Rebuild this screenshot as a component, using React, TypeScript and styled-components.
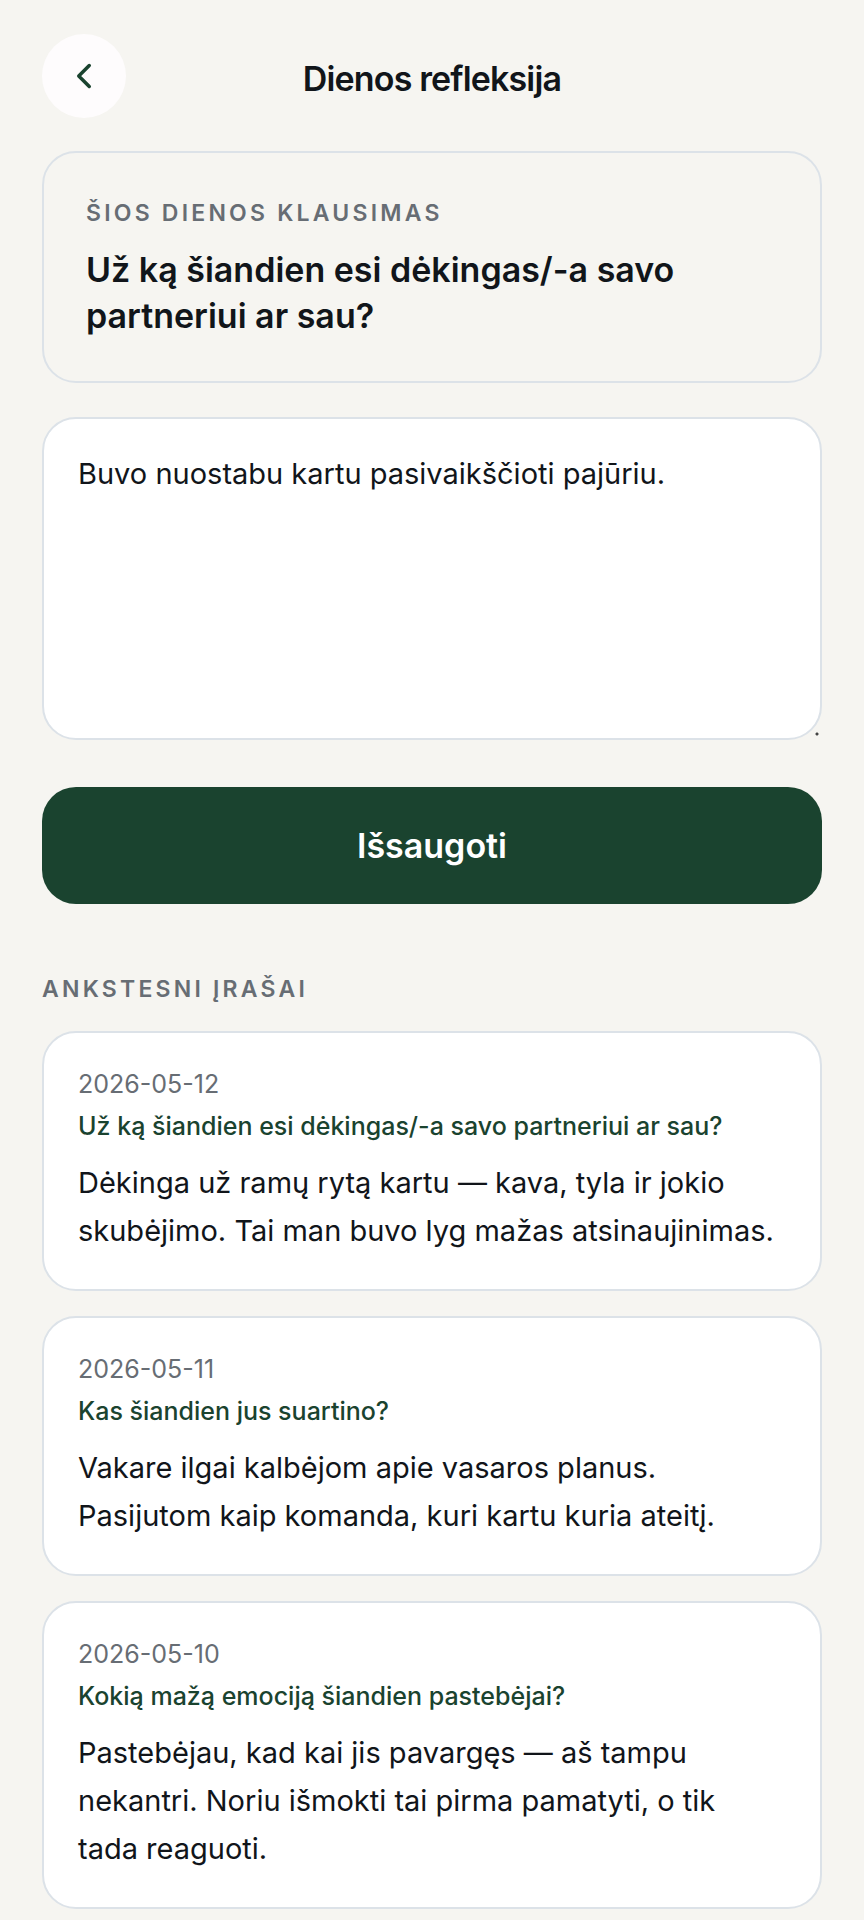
import * as React from 'react'
import { useState } from 'react'
import styled, { createGlobalStyle } from 'styled-components'
import { ChevronLeft } from 'lucide-react'

type Entry = {
  date: string
  question: string
  text: string
}

const entries: Entry[] = [
  {
    date: '2026-05-12',
    question: 'Už ką šiandien esi dėkingas/-a savo partneriui ar sau?',
    text: 'Dėkinga už ramų rytą kartu — kava, tyla ir jokio skubėjimo. Tai man buvo lyg mažas atsinaujinimas.',
  },
  {
    date: '2026-05-11',
    question: 'Kas šiandien jus suartino?',
    text: 'Vakare ilgai kalbėjom apie vasaros planus. Pasijutom kaip komanda, kuri kartu kuria ateitį.',
  },
  {
    date: '2026-05-10',
    question: 'Kokią mažą emociją šiandien pastebėjai?',
    text: 'Pastebėjau, kad kai jis pavargęs — aš tampu nekantri. Noriu išmokti tai pirma pamatyti, o tik tada reaguoti.',
  },
]

export default function App() {
  const [answer, setAnswer] = useState('Buvo nuostabu kartu pasivaikščioti pajūriu.')
  return (
    <Page>
      <GlobalStyle />
      <Header>
        <BackButton type='button' aria-label='Atgal'>
          <ChevronLeft size={42} />
        </BackButton>
        <Title>Dienos refleksija</Title>
      </Header>
      <Form onSubmit={event => event.preventDefault()}>
        <Prompt>
          <Overline>Šios dienos klausimas</Overline>
          <Question htmlFor='Answer'>Už ką šiandien esi dėkingas/-a savo partneriui ar sau?</Question>
        </Prompt>
        <Answer id='Answer' value={answer} onChange={e => setAnswer(e.target.value)} />
        <SaveButton type='submit'>Išsaugoti</SaveButton>
      </Form>
      <History>
        <Overline>Ankstesni įrašai</Overline>
        <EntryList>
          {entries.map(entry => (
            <EntryCard key={entry.date}>
              <EntryDate dateTime={entry.date}>{entry.date}</EntryDate>
              <EntryQuestion>{entry.question}</EntryQuestion>
              <EntryText>{entry.text}</EntryText>
            </EntryCard>
          ))}
        </EntryList>
      </History>
    </Page>
  )
}

const GlobalStyle = createGlobalStyle`
  *, *::before, *::after {
    box-sizing: border-box;
  }
  body {
    margin: 0;
    background: #f6f5f1;
    color: #11151a;
    font-family: Inter, 'Liberation Sans', sans-serif;
    font-optical-sizing: none;
    -webkit-font-smoothing: antialiased;
  }
  h1, h2, h3, p, ul {
    margin: 0;
    padding: 0;
  }
  button, textarea {
    font: inherit;
    font-optical-sizing: none;
  }
`
const Page = styled.main`
  padding: 34px 42px 25px;
`
const Header = styled.header`
  display: grid;
  grid-template-columns: 84px 1fr 84px;
  align-items: center;
  margin-bottom: 33px;
`
const BackButton = styled.button`
  display: flex;
  align-items: center;
  justify-content: center;
  height: 84px;
  padding: 0;
  border: 0;
  border-radius: 50%;
  background: #fefcfd;
  color: #1a432f;
  cursor: pointer;
`
const Title = styled.h1`
  padding-top: 6px;
  font-size: 34px;
  font-weight: 600;
  line-height: 46px;
  letter-spacing: -0.025em;
  text-align: center;
`
const Form = styled.form`
  display: flex;
  flex-direction: column;
`
const Prompt = styled.div`
  padding: 42px;
  border: 2px solid #dce2e8;
  border-radius: 34px;
`
const Overline = styled.h2`
  font-size: 23px;
  font-weight: 600;
  line-height: 36px;
  letter-spacing: 0.14em;
  text-transform: uppercase;
  color: #676d74;
`
const Question = styled.label`
  display: block;
  margin-top: 16px;
  font-size: 34px;
  font-weight: 600;
  line-height: 46px;
`
const Answer = styled.textarea`
  min-height: 323px;
  margin-top: 34px;
  padding: 32px 34px;
  border: 2px solid #dce2e8;
  border-radius: 34px;
  background: #fff;
  color: inherit;
  font-size: 29px;
  line-height: 46px;
  resize: vertical;
  outline: none;

  &::-webkit-resizer {
    background: radial-gradient(circle at 12px 11px, #444 1px, transparent 2px);
  }
`
const SaveButton = styled.button`
  height: 117px;
  margin-top: 47px;
  border: 0;
  border-radius: 34px;
  background: #1a432f;
  color: #fff;
  font-size: 34px;
  font-weight: 600;
  cursor: pointer;
`
const History = styled.section`
  margin-top: 67px;
`
const EntryList = styled.ul`
  display: flex;
  flex-direction: column;
  gap: 25px;
  margin-top: 24px;
  list-style: none;
`
const EntryCard = styled.li`
  padding: 34px;
  border: 2px solid #dce2e8;
  border-radius: 34px;
  background: #fff;
`
const EntryDate = styled.time`
  display: block;
  font-size: 25px;
  line-height: 34px;
  color: #676d74;
`
const EntryQuestion = styled.h3`
  margin-top: 8px;
  font-size: 25px;
  font-weight: 500;
  line-height: 34px;
  color: #1a432f;
`
const EntryText = styled.p`
  margin-top: 16px;
  font-size: 29px;
  line-height: 48px;
  text-wrap: pretty;
`
